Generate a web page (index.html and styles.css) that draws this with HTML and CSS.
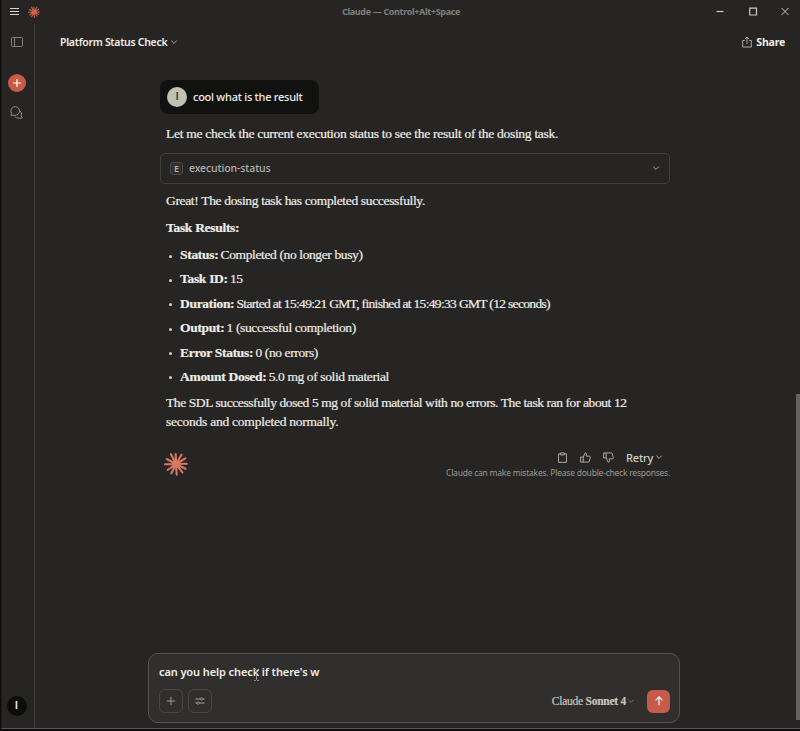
FILE: index.html
```
<!DOCTYPE html>
<html lang="en">
<head>
<meta charset="utf-8">
<title>Claude</title>
<link rel="stylesheet" href="styles.css">
</head>
<body>
<svg class="defs" width="0" height="0" aria-hidden="true">
  <symbol id="burst" viewBox="-12 -12 24 24">
    <g stroke="currentColor" stroke-width="2.100" stroke-linecap="round">
      <path d="M0 0L-.3-10M0 0L5.500-9.300M0 0L9.300-5.600M0 0L10.800-.2M0 0L9.500 4.700M0 0L6.400 8.400M0 0L.7 10.800M0 0L-4.600 9.300M0 0L-8.400 6M0 0L-11 .3M0 0L-9.200-5M0 0L-5-9.800"/>
    </g>
  </symbol>
  <symbol id="chevron" viewBox="0 0 8 8"><path d="M1.200 2.600L4 5.400 6.800 2.600" fill="none" stroke="currentColor"/></symbol>
</svg>
<div class="window">
  <header class="titlebar">
    <svg class="menu" viewBox="0 0 10 8"><path d="M0 .5h9M0 3.500h9M0 6.500h9" stroke="currentColor" stroke-width="1.100"/></svg>
    <svg class="mini-logo"><use href="#burst"/></svg>
    <span class="title">Claude — Control+Alt+Space</span>
    <div class="controls">
      <svg viewBox="0 0 10 10"><path d="M1.500 4.500h7" stroke="currentColor" stroke-width="1.200"/></svg>
      <svg viewBox="0 0 10 10"><path d="M1.700 1.200h6.800v6.800H1.700z" fill="none" stroke="currentColor" stroke-width="1.200"/></svg>
      <svg viewBox="0 0 10 10"><path d="M1.500 1l7 7M8.500 1l-7 7" stroke="currentColor"/></svg>
    </div>
  </header>
  <div class="body">
    <nav class="sidebar">
      <svg class="panel" viewBox="0 0 12 10"><path d="M1.500.5h9a1 1 0 0 1 1 1v7a1 1 0 0 1-1 1h-9a1 1 0 0 1-1-1v-7a1 1 0 0 1 1-1zM3.500 .5v9" fill="none" stroke="currentColor" stroke-width=".9"/></svg>
      <div class="new"><svg viewBox="0 0 10 10"><path d="M5 1v8M1 5h8" stroke="currentColor" stroke-width="1.200"/></svg></div>
      <svg class="chats" viewBox="0 0 12 12"><path d="M.7 8.600L1.600 7A4 4 0 1 1 4.800 8.600zM9 4.400a3.700 3.700 0 0 1 1.400 4.600l.9 2.200H7.500a3.600 3.600 0 0 1-3-1.500" fill="none" stroke="currentColor" stroke-width=".9" stroke-linejoin="round"/></svg>
      <div class="account">I</div>
    </nav>
    <main class="main">
      <div class="topbar">
        <div class="chat-name"><span>Platform Status Check</span><svg class="chev"><use href="#chevron"/></svg></div>
        <div class="share"><svg viewBox="0 0 10 12"><path d="M2.800 4.500H.7v6.500h8.600V4.500H7.200M5 8V1M2.900 3L5 1l2.100 2" fill="none" stroke="currentColor" stroke-width=".9"/></svg><span>Share</span></div>
      </div>
      <div class="thread">
        <div class="user"><div class="avatar">I</div><span>cool what is the result</span></div>
        <p class="line intro">Let me check the current execution status to see the result of the dosing task.</p>
        <div class="tool"><span class="badge">E</span><span class="tool-name">execution-status</span><svg class="chev"><use href="#chevron"/></svg></div>
        <p class="line great">Great! The dosing task has completed successfully.</p>
        <p class="line heading"><b>Task Results:</b></p>
        <ul class="results">
          <li><b>Status:</b> Completed (no longer busy)</li>
          <li><b>Task ID:</b> 15</li>
          <li class="timing"><b>Duration:</b> Started at 15:49:21 GMT, finished at 15:49:33 GMT (12 seconds)</li>
          <li><b>Output:</b> 1 (successful completion)</li>
          <li><b>Error Status:</b> 0 (no errors)</li>
          <li><b>Amount Dosed:</b> 5.0 mg of solid material</li>
        </ul>
        <p class="line summary">The SDL successfully dosed 5 mg of solid material with no errors. The task ran for about 12<br><span class="summary-end">seconds and completed normally.</span></p>
        <div class="foot">
          <svg class="logo"><use href="#burst"/></svg>
          <div class="foot-right">
            <div class="actions">
              <svg viewBox="0 0 12 12"><path d="M4 2H1.700v9.300h8.600V2H8M4 1h4v2.200H4z" fill="none" stroke="currentColor"/></svg>
              <svg viewBox="0 0 12 12"><path d="M.7 5.500h2.800V11H.7zM3.500 5.500L5.500 1c1.400 0 1.700.9 1.500 1.800L6.700 4.500H10c.9 0 1.400.6 1.200 1.300l-1 4.300c-.2.600-.5.900-1.100.9H3.500" fill="none" stroke="currentColor" stroke-linejoin="round"/></svg>
              <svg viewBox="0 0 12 12"><path d="M11.300 6.500H8.500V1h2.800zM8.500 6.500L6.500 11C5.100 11 4.800 10.100 5 9.200L5.300 7.500H2C1.100 7.500.6 6.900.8 6.200L1.800 1.900C2 1.300 2.300 1 2.900 1H8.500" fill="none" stroke="currentColor" stroke-linejoin="round" transform="matrix(-1 0 0 1 12 0)"/></svg>
              <span class="retry">Retry</span><svg class="chev"><use href="#chevron"/></svg>
            </div>
            <div class="note">Claude can make mistakes. Please double-check responses.</div>
          </div>
        </div>
      </div>
      <div class="composer">
        <div class="draft"><span>can you help check if there's w</span><svg class="ibeam" viewBox="0 0 7 12"><path d="M1 .5h1.500l1 1 1-1H6M3.500 1.500v9M1 11.500h1.500l1-1 1 1H6" fill="none" stroke="currentColor" stroke-width=".9"/></svg></div>
        <div class="tools">
          <div class="btn"><svg viewBox="0 0 10 10"><path d="M5 .8v8.400M.8 5h8.400" stroke="currentColor" stroke-width=".9"/></svg></div>
          <div class="btn"><svg viewBox="0 0 10 10"><path d="M.5 3h5M8 3h1.500M.5 7H2M4.500 7h5" stroke="currentColor"/><circle cx="6.700" cy="3" r="1.200" fill="none" stroke="currentColor" stroke-width=".8"/><circle cx="3.200" cy="7" r="1.200" fill="none" stroke="currentColor" stroke-width=".8"/></svg></div>
          <div class="model"><span>Claude <b>Sonnet 4</b></span><svg class="chev"><use href="#chevron"/></svg></div>
          <div class="send"><svg viewBox="0 0 10 10"><path d="M5 9.300V1M1.600 4.300L5 .9l3.400 3.400" fill="none" stroke="currentColor" stroke-width="1.100"/></svg></div>
        </div>
      </div>
    </main>
  </div>
  <div class="scrollbar"></div>
</div>
</body>
</html>
```
FILE: styles.css
```
* { box-sizing: border-box; }
body { margin: 0; background: #0d0b0e; font-family: "Noto Sans", sans-serif; color: #efeee9; overflow: hidden; }
.defs { position: absolute; }
svg { display: block; flex: none; }
p, ul { margin: 0; padding: 0; }
.window { position: relative; height: 729px; margin-left: 1px; background: #262523; border-bottom: 1px solid #555550; border-left: 1px solid #1c1b1a; display: flex; flex-direction: column; }
.titlebar { height: 24px; flex: none; display: flex; align-items: center; position: relative; padding-left: 8px; }
.menu { width: 10px; height: 8px; color: #d8d7d2; }
.mini-logo { width: 12px; height: 12px; margin: -1px 0 0 8px; color: #d4634e; }
.title { position: absolute; left: 340px; top: 4px; line-height: 16px; font-size: 9px; font-weight: 700; letter-spacing: -.34px; color: #7f7e7b; white-space: nowrap; }
.controls { display: flex; gap: 22.500px; margin-left: auto; padding-right: 10px; color: #c8c7c3; }
.controls svg { width: 10px; height: 10px; }
.body { flex: 1; display: flex; min-height: 0; }
.sidebar { width: 33px; flex: none; border-right: 1px solid #42413e; display: flex; flex-direction: column; align-items: center; padding: 13px 3px 12px 0; }
.panel { width: 12px; height: 10px; color: #8d8c87; }
.new { width: 18px; height: 18px; margin-top: 27px; border-radius: 50%; background: #c75b49; color: #fff; display: grid; place-items: center; }
.new svg { width: 10px; height: 10px; }
.chats { width: 13px; height: 13px; margin-top: 14px; color: #91908b; }
.account { width: 20px; height: 20px; margin-top: auto; border-radius: 50%; background: #0c0c0b; display: grid; place-items: center; font: 700 10px/1 "Liberation Sans", sans-serif; }
.main { flex: 1; min-width: 0; display: flex; flex-direction: column; }
.topbar { height: 36px; display: flex; justify-content: space-between; align-items: center; padding: 0 15px 0 25px; font-size: 10.500px; font-weight: 600; letter-spacing: -.3px; }
.chat-name, .share { display: flex; align-items: center; gap: 3px; }
.chev { width: 8px; height: 8px; color: #aaa9a4; }
.share { gap: 4px; font-weight: 700; letter-spacing: -.2px; }
.share svg { width: 10px; height: 12px; color: #bbbab6; }
.thread { width: 510px; margin: 20px 0 0 125px; }
.user { width: 159px; height: 34px; border-radius: 8px; background: #111110; display: flex; align-items: center; gap: 6px; padding-left: 7px; font-size: 11px; font-weight: 500; letter-spacing: -.26px; white-space: nowrap; }
.user span { margin-top: -1px; }
.avatar { width: 20px; height: 20px; border-radius: 50%; background: #c2c1b6; color: #3a3936; display: grid; place-items: center; font: 700 10px/1 "Liberation Sans", sans-serif; }
.line, .results { font: 13.500px/18px "Liberation Serif", serif; color: #eeede8; white-space: nowrap; padding-left: 6px; -webkit-text-stroke: .2px currentColor; }
.intro { margin-top: 11px; letter-spacing: -.28px; }
.tool { margin-top: 10px; height: 31px; border: 1px solid #42413d; border-radius: 5px; display: flex; align-items: center; padding: 0 9px 1px; font-size: 10.500px; font-weight: 500; letter-spacing: -.1px; color: #b3b2ab; }
.tool-name { margin-top: -1px; }
.badge { width: 13px; height: 13px; border: 1px solid #4b4a46; border-radius: 3px; display: grid; place-items: center; font-size: 9px; line-height: 1; font-weight: 600; background: #302f2c; margin-right: 6px; }
.tool .chev { margin-left: auto; }
.great { margin-top: 8px; letter-spacing: -.34px; }
.heading { margin-top: 9px; letter-spacing: -.3px; }
.results { list-style: none; margin-top: 6px; letter-spacing: -.38px; }
.results .timing { letter-spacing: -.67px; }
.results b { letter-spacing: -.3px; }
.results li { height: 24.400px; line-height: 24px; display: flex; gap: 2.200px; }
.results li::before { content: ""; width: 3px; height: 3px; border-radius: 50%; background: #d6d5d0; margin: 11.500px 5.800px 0 3px; }
.summary { margin-top: 5px; line-height: 18.500px; letter-spacing: -.41px; }
.summary-end { letter-spacing: -.24px; }
.foot { display: flex; justify-content: space-between; margin-top: 18px; padding-left: 4px; }
.logo { width: 24px; height: 24px; margin-top: 3px; color: #d97862; }
.actions { display: flex; align-items: center; justify-content: flex-end; height: 16px; color: #b7b6b0; padding-right: 7px; }
.actions svg { width: 11px; height: 11px; margin-right: 12px; }
.actions .chev { width: 8px; height: 8px; margin: 0 0 0 2px; }
.retry { font-size: 11px; font-weight: 500; letter-spacing: -.2px; color: #d0cfc3; }
.note { font-size: 8.500px; line-height: 16px; letter-spacing: -.23px; color: #9a9993; white-space: nowrap; }
.composer { width: 532px; height: 70px; margin: auto 0 5px 113px; background: #302f2d; border: 1px solid #55544f; border-radius: 10px; padding: 9px 9px 0 10px; }
.draft { position: relative; height: 18px; line-height: 18px; font-size: 11px; font-weight: 600; letter-spacing: -.1px; white-space: nowrap; }
.ibeam { position: absolute; left: 94px; top: 6px; width: 7px; height: 12px; color: #a5a4a0; }
.tools { display: flex; align-items: center; margin-top: 8px; }
.btn { width: 24px; height: 24px; margin-right: 5px; border: 1px solid #484743; border-radius: 6px; display: grid; place-items: center; color: #a5a49e; }
.btn svg { width: 10px; height: 10px; }
.model { margin-left: auto; display: flex; align-items: center; gap: 1px; font: 11.500px/16px "Liberation Serif", serif; letter-spacing: -.25px; color: #c6c5be; -webkit-text-stroke: .2px currentColor; }
.model .chev { color: #797873; }
.send { width: 23px; height: 23px; margin-left: 12px; border-radius: 6px; background: #c75b49; color: #fff; display: grid; place-items: center; }
.send svg { width: 10px; height: 10px; }
.scrollbar { position: absolute; right: 0; top: 394px; width: 4px; height: 326px; background: #64635f; }
```
